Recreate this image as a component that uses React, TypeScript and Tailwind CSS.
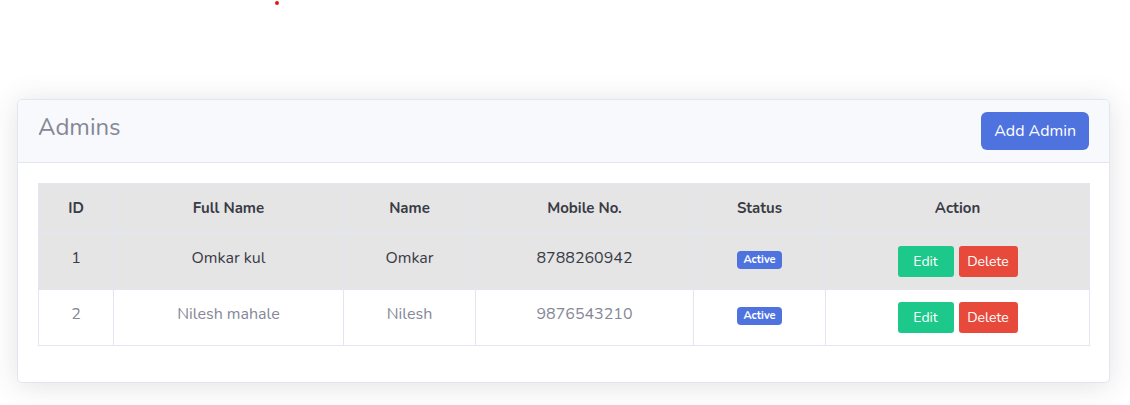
import React from 'react';

const admins = [
  { id: 1, fullName: 'Omkar kul', name: 'Omkar', mobile: '8788260942', status: 'Active' },
  { id: 2, fullName: 'Nilesh mahale', name: 'Nilesh', mobile: '9876543210', status: 'Active' },
];

const App = () => {
  return (
    <div className="min-h-[405px] bg-white font-['Nunito','Lato','Noto_Sans',sans-serif] text-[#858796]">
      {/* stray dot */}
      <div className="ml-[275px] pt-[1px]">
        <div className="w-[4px] h-[4px] rounded-full bg-[#e01818]" />
      </div>

      <div className="pl-[17px] pr-[20px] pt-[94px]">
        <div className="bg-white border border-[#e3e6f0] rounded-[5px] shadow-[0_0.15rem_1.75rem_0_rgba(58,59,69,0.15)] overflow-hidden">
          {/* Header */}
          <div className="flex justify-between items-start bg-[#f8f9fc] border-b border-[#e3e6f0] px-5 py-3">
            <h3 className="text-[24px] leading-[29px] text-[#858796] pt-[1px]">Admins</h3>
            <button className="h-[38px] px-[13px] rounded-[6px] bg-[#4e73df] text-white text-[16px] leading-6">
              Add Admin
            </button>
          </div>

          {/* Body */}
          <div className="p-5 pb-[36px]">
            <table className="w-full table-fixed border-collapse border border-[#e3e6f0] text-center text-[16px] leading-6">
              <colgroup>
                <col className="w-[75px]" />
                <col className="w-[230px]" />
                <col className="w-[132px]" />
                <col className="w-[218px]" />
                <col className="w-[132px]" />
                <col className="w-[264px]" />
              </colgroup>
              <thead>
                <tr className="bg-[#e5e5e6] text-[#3a3b45]">
                  {['ID', 'Full Name', 'Name', 'Mobile No.', 'Status', 'Action'].map(h => (
                    <th key={h} className="border border-[#e3e6f0] border-b-2 px-3 py-3 font-bold text-[15px]">
                      {h}
                    </th>
                  ))}
                </tr>
              </thead>
              <tbody>
                {admins.map((a, i) => (
                  <tr key={a.id} className={i === 0 ? 'bg-[#e5e5e6] text-[#3a3b45]' : 'bg-white text-[#858796]'}>
                    <td className="border border-[#e3e6f0] px-3 py-3 align-top">{a.id}</td>
                    <td className="border border-[#e3e6f0] px-3 py-3 align-top">{a.fullName}</td>
                    <td className="border border-[#e3e6f0] px-3 py-3 align-top">{a.name}</td>
                    <td className="border border-[#e3e6f0] px-3 py-3 align-top">{a.mobile}</td>
                    <td className="border border-[#e3e6f0] px-3 py-3 align-top">
                      <span className="inline-block mt-[4px] px-[6px] h-[18px] leading-[18px] rounded-[4px] bg-[#4e73df] text-white text-[11px] font-bold">
                        {a.status}
                      </span>
                    </td>
                    <td className="border border-[#e3e6f0] px-3 py-3 align-top">
                      <div className="flex justify-center gap-[5px]">
                        <button className="w-[56px] h-[31px] rounded-[3px] bg-[#1cc88a] text-white text-[14px]">Edit</button>
                        <button className="w-[59px] h-[31px] rounded-[3px] bg-[#e74a3b] text-white text-[14px]">Delete</button>
                      </div>
                    </td>
                  </tr>
                ))}
              </tbody>
            </table>
          </div>
        </div>
      </div>
    </div>
  );
};

export default App;
